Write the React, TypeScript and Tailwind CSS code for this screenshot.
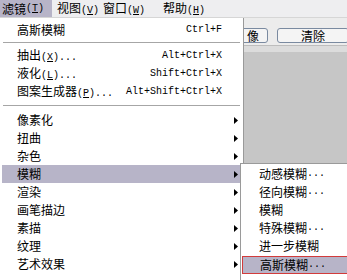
import React from 'react';

const cjk = "font-['SimSun','Noto_Sans_CJK_SC',sans-serif]";
const mono = "font-['Liberation_Mono',monospace]";

const Acc = ({ k }: { k: string }) => (
  <span className={`${mono} text-[10px]`}>
    (<span className="underline underline-offset-1">{k}</span>)
  </span>
);

const Dots = () => <span className={`${mono} text-[10px]`}>...</span>;

const Arrow = () => (
  <svg width="4" height="7" viewBox="0 0 4 7" className="absolute left-[232px] top-[6px]">
    <polygon points="0,0 4,3.5 0,7" fill="#000" />
  </svg>
);

type Item = { label: React.ReactNode; shortcut?: string; sub?: boolean; active?: boolean };

const Row = ({ item }: { item: Item }) => (
  <div
    className={`relative h-[18px] mx-[2px] flex items-center pl-[15px] pr-[19px] ${
      item.active ? 'bg-[#b7b4c8]' : ''
    }`}
  >
    <span className="flex-1 leading-none">{item.label}</span>
    {item.shortcut && <span className={`${mono} text-[10px] leading-none`}>{item.shortcut}</span>}
    {item.sub && <Arrow />}
  </div>
);

const Sep = ({ h, top }: { h: string; top: string }) => (
  <div className={`${h} ${top} mx-[3px]`}>
    <div className="h-px bg-[#a6a6a6]" />
  </div>
);

export default function App() {
  const top: Item[] = [
    { label: <>抽出<Acc k="X" /><Dots /></>, shortcut: 'Alt+Ctrl+X' },
    { label: <>液化<Acc k="L" /><Dots /></>, shortcut: 'Shift+Ctrl+X' },
    { label: <>图案生成器<Acc k="P" /><Dots /></>, shortcut: 'Alt+Shift+Ctrl+X' },
  ];
  const subs: Item[] = [
    { label: '像素化', sub: true },
    { label: '扭曲', sub: true },
    { label: '杂色', sub: true },
    { label: '模糊', sub: true, active: true },
    { label: '渲染', sub: true },
    { label: '画笔描边', sub: true },
    { label: '素描', sub: true },
    { label: '纹理', sub: true },
    { label: '艺术效果', sub: true },
  ];
  const blur = [
    { t: '动感模糊', d: true },
    { t: '径向模糊', d: true },
    { t: '模糊', d: false },
    { t: '特殊模糊', d: true },
    { t: '进一步模糊', d: false },
    { t: '高斯模糊', d: true },
  ];

  return (
    <div className={`relative w-[347px] h-[280px] overflow-hidden bg-[#c6c6c6] text-[12px] text-black ${cjk}`}>
      {/* menu bar */}
      <div className="h-[18px] bg-[#eeeef0] border-b border-[#d6d6d6] flex items-center">
        <div className="h-full w-[52px] bg-[#b7b4c8] flex items-center pl-[2px]">
          滤镜<Acc k="T" />
        </div>
        <div className="pl-[5px] w-[51px]">视图<Acc k="V" /></div>
        <div className="w-[60px]">窗口<Acc k="W" /></div>
        <div>帮助<Acc k="H" /></div>
      </div>

      {/* toolbar */}
      <div className="h-[27px] bg-[#ececec] flex items-end justify-end gap-[9px] pb-[2px]">
        <div className="h-[15px] w-[40px] border border-[#7a8aa0] rounded-[3px] bg-[#f4f4f4] flex items-center justify-end pr-[8px] leading-none">
          像
        </div>
        <div className="h-[15px] w-[72px] -mr-[2px] border border-[#7a8aa0] rounded-[3px] bg-[#f4f4f4] flex items-center justify-center leading-none">
          清除
        </div>
      </div>
      <div className="h-[7px] bg-[#dcdcdc] border-t border-[#bdbdbd]" />

      {/* filter dropdown */}
      <div className="absolute left-0 top-[18px] bottom-0 w-[244px] bg-white border-r border-[#9a9a9a] pt-[3px]">
        <Row item={{ label: '高斯模糊', shortcut: 'Ctrl+F' }} />
        <Sep h="h-[8px]" top="pt-[3px]" />
        {top.map((it, i) => (
          <Row key={i} item={it} />
        ))}
        <Sep h="h-[10px]" top="pt-[4px]" />
        {subs.map((it, i) => (
          <Row key={i} item={it} />
        ))}
      </div>

      {/* blur submenu */}
      <div className="absolute left-[240px] top-[163px] w-[110px] h-[130px] bg-white border-l border-t border-[#9a9a9a] pt-[1px]">
        {blur.map((b, i) =>
          i === blur.length - 1 ? (
            <div
              key={i}
              className="h-[18px] mt-[1px] ml-[1px] bg-[#b7b4c8] border border-[#d23b3b] flex items-center pl-[17px] leading-none"
            >
              {b.t}
              {b.d && <Dots />}
            </div>
          ) : (
            <div key={i} className="h-[18px] flex items-center pl-[18px] leading-none">
              {b.t}
              {b.d && <Dots />}
            </div>
          )
        )}
      </div>
    </div>
  );
}
